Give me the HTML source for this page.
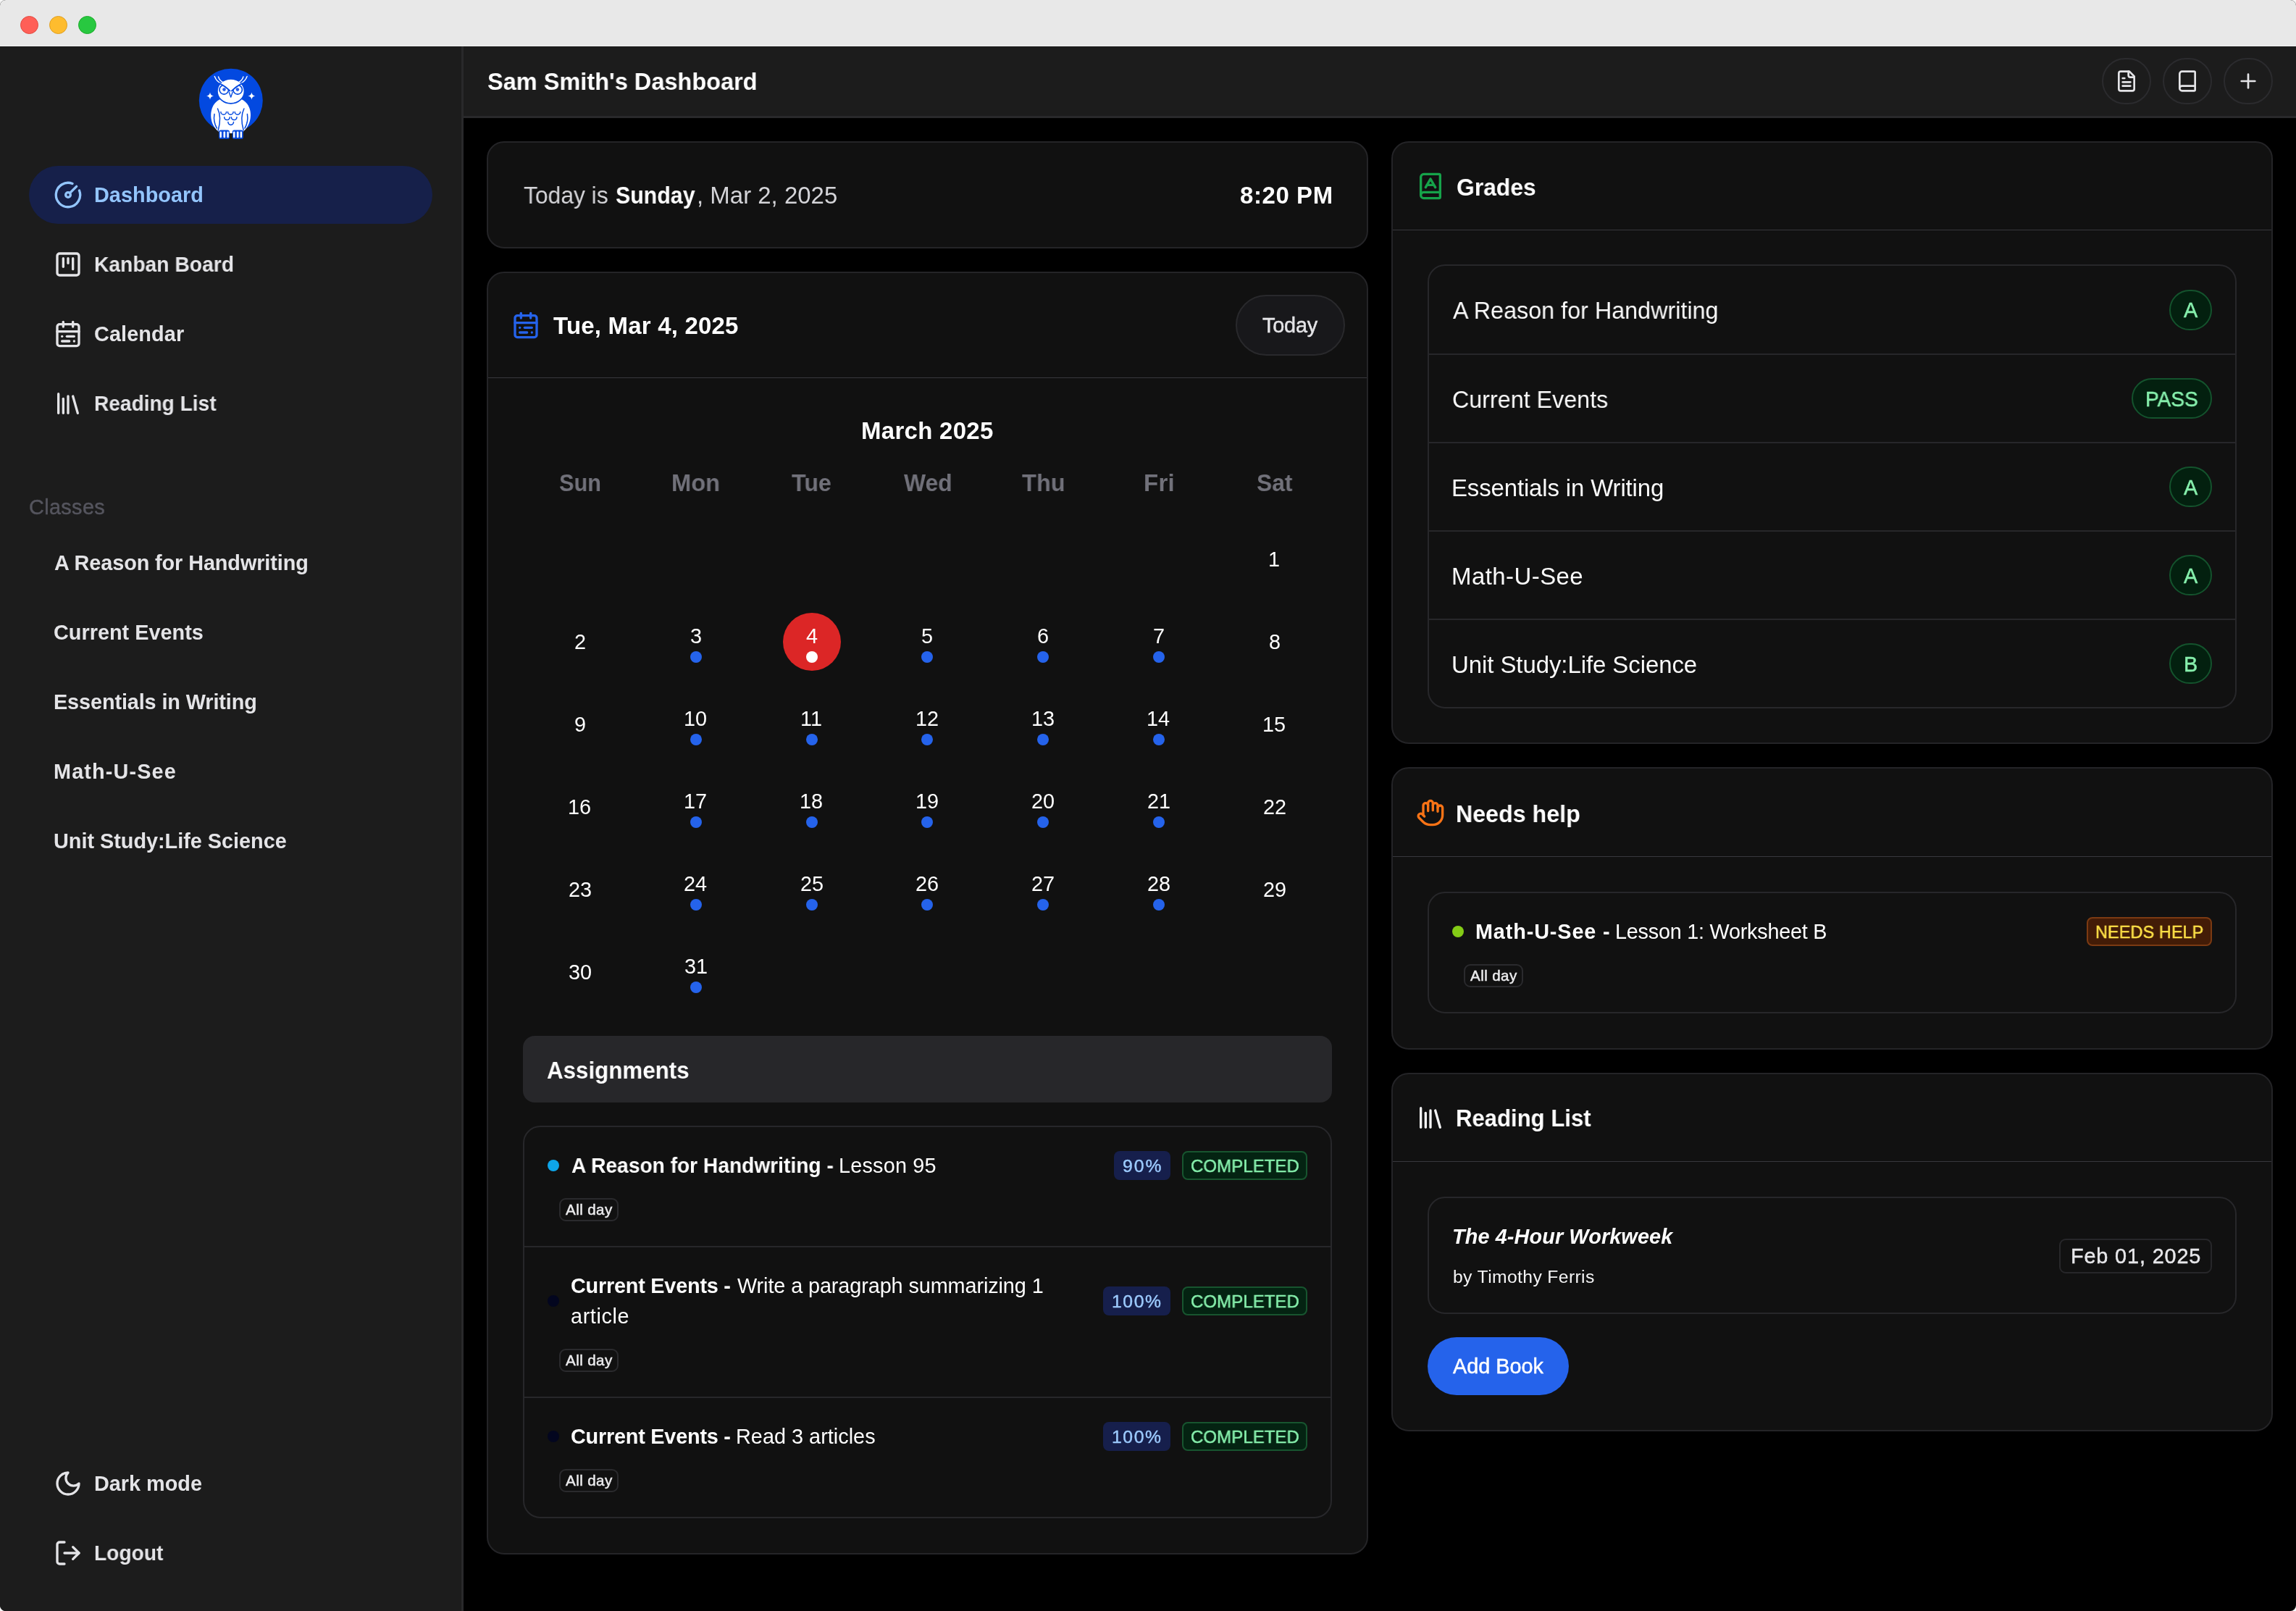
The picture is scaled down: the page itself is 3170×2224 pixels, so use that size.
<!DOCTYPE html>
<html lang="en"><head><meta charset="utf-8"><title>Sam Smith's Dashboard</title>
<style>
html,body{margin:0;padding:0;background:#f7f7f7;}
body{width:3170px;height:2224px;overflow:hidden;font-family:"Liberation Sans", sans-serif;}
#win{position:relative;width:3170px;height:2224px;overflow:hidden;background:#000;border-radius:8px;}
.b{position:absolute;box-sizing:border-box;}
.i{position:absolute;display:block;overflow:visible;}
.t{position:absolute;white-space:nowrap;font-weight:400;transform-origin:0 0;will-change:transform;}
</style></head>
<body><div id="win">
<div class="b" style="left:0px;top:0px;width:3170px;height:63px;background:#e8e8e8;"></div>
<div class="b" style="left:0px;top:63px;width:3170px;height:1px;background:#f4f4f4;"></div>
<div class="b" style="left:27.5px;top:21.5px;width:25px;height:25px;background:#ff5f57;border:1px solid #e24b41;border-radius:13px;"></div>
<div class="b" style="left:67.5px;top:21.5px;width:25px;height:25px;background:#febc2e;border:1px solid #dfa023;border-radius:13px;"></div>
<div class="b" style="left:107.5px;top:21.5px;width:25px;height:25px;background:#28c840;border:1px solid #1dad2b;border-radius:13px;"></div>
<div class="b" style="left:0px;top:64px;width:640px;height:2160px;background:#1c1c1c;border-right:3px solid #29292b;"></div>
<svg class="i" style="left:258px;top:84px" width="120" height="120" viewBox="0 0 120 120" fill="none" stroke-linecap="round" stroke-linejoin="round">
<circle cx="60.8" cy="54.7" r="44" fill="#0349e0"/>
<path d="M60.7 50C80 50 88.5 62 88 76C87.5 86 83 93 78 97.5L43.5 97.5C38 93 33.5 86 33.2 76C33 62 41 50 60.7 50Z" fill="#fff"/>
<rect x="58" y="95" width="5.4" height="5" fill="#fff"/>
<g stroke="#0349e0" stroke-width="1.5">
<path d="M42.5 66C46.5 74 46 86 43.2 96"/><path d="M38 73.4C36.5 82 38.5 88 41.4 93"/>
<path d="M78.9 66C74.9 74 75.4 86 78.2 96"/><path d="M83.4 73.4C84.9 82 82.9 88 80 93"/>
<path d="M46.9 70.4a3.8 3.8 0 0 0 7.6 0"/><path d="M56.5 70.4a3.8 3.8 0 0 0 7.6 0"/><path d="M66.2 70.4a3.8 3.8 0 0 0 7.6 0"/>
<path d="M51.7 77.8a3.8 3.8 0 0 0 7.6 0"/><path d="M61.4 77.8a3.8 3.8 0 0 0 7.6 0"/>
<path d="M56.9 84.6a3.8 3.8 0 0 0 7.6 0"/>
</g>
<ellipse cx="60.7" cy="41.9" rx="18.7" ry="17" fill="#fff" stroke="#0349e0" stroke-width="1.6"/>
<g stroke="#fff" stroke-width="1.4">
<path d="M38.3 21.5Q41 29 48.5 31.8"/><path d="M43.5 22Q45 27 49.8 29.6"/>
<path d="M83.1 21.5Q80.4 29 72.9 31.8"/><path d="M77.9 22Q76.4 27 71.6 29.6"/>
</g>
<g stroke="#0349e0" stroke-width="1.7" fill="#fff">
<circle cx="51.3" cy="39.8" r="6.3"/><circle cx="70.1" cy="39.8" r="6.3"/>
</g>
<clipPath id="owlhead"><ellipse cx="60.7" cy="41.9" rx="17.8" ry="16.1"/></clipPath><g clip-path="url(#owlhead)"><path d="M43 29.5L60 41.4L60 29L46 26Z" fill="#fff"/><path d="M78.4 29.5L61.4 41.4L61.4 29L75.4 26Z" fill="#fff"/></g>
<g stroke="#0349e0" stroke-width="1.9" fill="none">
<path d="M45 31.2Q52 34.5 59.4 41.4"/><path d="M76.4 31.2Q69.4 34.5 62 41.4"/>
<path d="M58.3 43.2L60.7 50.2L63.1 43.2" stroke-width="1.3" fill="#fff"/>
</g>
<circle cx="51.5" cy="39.6" r="2.3" fill="#2a5ee8"/><circle cx="69.9" cy="39.6" r="2.3" fill="#2a5ee8"/>
<path d="M32 43.4Q32.7 47.7 37 48.4Q32.7 49.1 32 53.4Q31.3 49.1 27 48.4Q31.3 47.7 32 43.4Z" fill="#fff"/>
<path d="M89.4 43.4Q90.1 47.7 94.4 48.4Q90.1 49.1 89.4 53.4Q88.7 49.1 84.4 48.4Q88.7 47.7 89.4 43.4Z" fill="#fff"/>
<rect x="44.2" y="95.6" width="14.7" height="12.2" rx="2.6" fill="#0349e0"/>
<rect x="62.8" y="95.6" width="15" height="12.2" rx="2.6" fill="#0349e0"/>
<g fill="#fff">
<rect x="45.5" y="97.4" width="2.4" height="8.8" rx="1.1"/><rect x="50.5" y="97.4" width="2.6" height="8.8" rx="1.1"/><rect x="55.4" y="97.4" width="2.4" height="8.8" rx="1.1"/>
<rect x="64" y="97.4" width="2.4" height="8.8" rx="1.1"/><rect x="68.9" y="97.4" width="2.6" height="8.8" rx="1.1"/><rect x="73.7" y="97.4" width="2.4" height="8.8" rx="1.1"/>
</g>
</svg>

<div class="b" style="left:40px;top:229px;width:557px;height:80px;background:#16204a;border-radius:40px;"></div>
<svg class="i" style="left:74px;top:249px" width="40" height="40" viewBox="0 0 24 24" fill="none" stroke="#93c5fd" stroke-width="2" stroke-linecap="round" stroke-linejoin="round"><path d="M15.6 2.7a10 10 0 1 0 5.7 5.7"/><circle cx="12" cy="12" r="2"/><path d="M13.4 10.6 19 5"/></svg>
<svg class="i" style="left:74px;top:345px" width="40" height="40" viewBox="0 0 24 24" fill="none" stroke="#e4e4e7" stroke-width="2" stroke-linecap="round" stroke-linejoin="round"><rect width="18" height="18" x="3" y="3" rx="2"/><path d="M8 7v7"/><path d="M12 7v4"/><path d="M16 7v9"/></svg>
<svg class="i" style="left:74px;top:441px" width="40" height="40" viewBox="0 0 24 24" fill="none" stroke="#e4e4e7" stroke-width="2" stroke-linecap="round" stroke-linejoin="round"><rect width="18" height="18" x="3" y="4" rx="2"/><path d="M16 2v4"/><path d="M3 10h18"/><path d="M8 2v4"/><path d="M17 14h-6"/><path d="M13 18H7"/><path d="M7 14h.01"/><path d="M17 18h.01"/></svg>
<svg class="i" style="left:74px;top:537px" width="40" height="40" viewBox="0 0 24 24" fill="none" stroke="#e4e4e7" stroke-width="2" stroke-linecap="round" stroke-linejoin="round"><path d="m16 6 4 14"/><path d="M12 6v14"/><path d="M8 8v12"/><path d="M4 4v16"/></svg>
<svg class="i" style="left:74px;top:2028px" width="40" height="40" viewBox="0 0 24 24" fill="none" stroke="#e4e4e7" stroke-width="2" stroke-linecap="round" stroke-linejoin="round"><path d="M12 3a6 6 0 0 0 9 9 9 9 0 1 1-9-9Z"/></svg>
<svg class="i" style="left:74px;top:2124px" width="40" height="40" viewBox="0 0 24 24" fill="none" stroke="#e4e4e7" stroke-width="2" stroke-linecap="round" stroke-linejoin="round"><path d="M9 21H5a2 2 0 0 1-2-2V5a2 2 0 0 1 2-2h4"/><polyline points="16 17 21 12 16 7"/><line x1="21" x2="9" y1="12" y2="12"/></svg>
<div class="b" style="left:640px;top:64px;width:2530px;height:99px;background:#1c1c1c;border-bottom:3px solid #29292b;"></div>
<div class="b" style="left:2902px;top:80px;width:68px;height:64px;border:2px solid #2b2b2e;border-radius:32px;"></div>
<svg class="i" style="left:2920px;top:96px" width="32" height="32" viewBox="0 0 24 24" fill="none" stroke="#e4e4e7" stroke-width="2" stroke-linecap="round" stroke-linejoin="round"><path d="M15 2H6a2 2 0 0 0-2 2v16a2 2 0 0 0 2 2h12a2 2 0 0 0 2-2V7Z"/><path d="M14 2v4a2 2 0 0 0 2 2h4"/><path d="M10 9H8"/><path d="M16 13H8"/><path d="M16 17H8"/></svg>
<div class="b" style="left:2986px;top:80px;width:68px;height:64px;border:2px solid #2b2b2e;border-radius:32px;"></div>
<svg class="i" style="left:3004px;top:96px" width="32" height="32" viewBox="0 0 24 24" fill="none" stroke="#e4e4e7" stroke-width="2" stroke-linecap="round" stroke-linejoin="round"><path d="M4 19.5v-15A2.5 2.5 0 0 1 6.5 2H19a1 1 0 0 1 1 1v18a1 1 0 0 1-1 1H6.5a1 1 0 0 1 0-5H20"/></svg>
<div class="b" style="left:3070px;top:80px;width:68px;height:64px;border:2px solid #2b2b2e;border-radius:32px;"></div>
<svg class="i" style="left:3088px;top:96px" width="32" height="32" viewBox="0 0 24 24" fill="none" stroke="#e4e4e7" stroke-width="2" stroke-linecap="round" stroke-linejoin="round"><path d="M5 12h14"/><path d="M12 5v14"/></svg>
<div class="b" style="left:672px;top:195px;width:1217px;height:148px;background:#111111;border:2px solid #242427;border-radius:24px;"></div>
<div class="b" style="left:672px;top:375px;width:1217px;height:1771px;background:#111111;border:2px solid #242427;border-radius:24px;"></div>
<svg class="i" style="left:706px;top:429px" width="40" height="40" viewBox="0 0 24 24" fill="none" stroke="#2563eb" stroke-width="2" stroke-linecap="round" stroke-linejoin="round"><rect width="18" height="18" x="3" y="4" rx="2"/><path d="M16 2v4"/><path d="M3 10h18"/><path d="M8 2v4"/><path d="M17 14h-6"/><path d="M13 18H7"/><path d="M7 14h.01"/><path d="M17 18h.01"/></svg>
<div class="b" style="left:1706px;top:407px;width:151px;height:84px;background:#18181b;border:2px solid #29292c;border-radius:42px;"></div>
<div class="b" style="left:674px;top:521px;width:1213px;height:1px;background:#38383d;"></div>
<div class="b" style="left:1080.8px;top:846px;width:80px;height:80px;background:#dc2626;border-radius:40px;"></div>
<div class="b" style="left:952.6px;top:899px;width:16px;height:16px;background:#2563eb;border-radius:8px;"></div>
<div class="b" style="left:1112.5px;top:899px;width:16px;height:16px;background:#ffffff;border-radius:8px;"></div>
<div class="b" style="left:1272.3px;top:899px;width:16px;height:16px;background:#2563eb;border-radius:8px;"></div>
<div class="b" style="left:1432.1px;top:899px;width:16px;height:16px;background:#2563eb;border-radius:8px;"></div>
<div class="b" style="left:1592.0px;top:899px;width:16px;height:16px;background:#2563eb;border-radius:8px;"></div>
<div class="b" style="left:952.6px;top:1013px;width:16px;height:16px;background:#2563eb;border-radius:8px;"></div>
<div class="b" style="left:1112.5px;top:1013px;width:16px;height:16px;background:#2563eb;border-radius:8px;"></div>
<div class="b" style="left:1272.3px;top:1013px;width:16px;height:16px;background:#2563eb;border-radius:8px;"></div>
<div class="b" style="left:1432.1px;top:1013px;width:16px;height:16px;background:#2563eb;border-radius:8px;"></div>
<div class="b" style="left:1592.0px;top:1013px;width:16px;height:16px;background:#2563eb;border-radius:8px;"></div>
<div class="b" style="left:952.6px;top:1127px;width:16px;height:16px;background:#2563eb;border-radius:8px;"></div>
<div class="b" style="left:1112.5px;top:1127px;width:16px;height:16px;background:#2563eb;border-radius:8px;"></div>
<div class="b" style="left:1272.3px;top:1127px;width:16px;height:16px;background:#2563eb;border-radius:8px;"></div>
<div class="b" style="left:1432.1px;top:1127px;width:16px;height:16px;background:#2563eb;border-radius:8px;"></div>
<div class="b" style="left:1592.0px;top:1127px;width:16px;height:16px;background:#2563eb;border-radius:8px;"></div>
<div class="b" style="left:952.6px;top:1241px;width:16px;height:16px;background:#2563eb;border-radius:8px;"></div>
<div class="b" style="left:1112.5px;top:1241px;width:16px;height:16px;background:#2563eb;border-radius:8px;"></div>
<div class="b" style="left:1272.3px;top:1241px;width:16px;height:16px;background:#2563eb;border-radius:8px;"></div>
<div class="b" style="left:1432.1px;top:1241px;width:16px;height:16px;background:#2563eb;border-radius:8px;"></div>
<div class="b" style="left:1592.0px;top:1241px;width:16px;height:16px;background:#2563eb;border-radius:8px;"></div>
<div class="b" style="left:952.6px;top:1355px;width:16px;height:16px;background:#2563eb;border-radius:8px;"></div>
<div class="b" style="left:722px;top:1430px;width:1117px;height:92px;background:#27272a;border-radius:16px;"></div>
<div class="b" style="left:722px;top:1554px;width:1117px;height:542px;border:2px solid #27272a;border-radius:24px;"></div>
<div class="b" style="left:724px;top:1720px;width:1113px;height:2px;background:#27272a;"></div>
<div class="b" style="left:724px;top:1928px;width:1113px;height:2px;background:#27272a;"></div>
<div class="b" style="left:756px;top:1601px;width:16px;height:16px;background:#0ea5e9;border-radius:8px;"></div>
<div class="b" style="left:772px;top:1654px;width:82px;height:32px;border:2px solid #2a2a2d;border-radius:9px;"></div>
<div class="b" style="left:1538px;top:1589px;width:78px;height:40px;background:#161f4c;border-radius:8px;"></div>
<div class="b" style="left:1632px;top:1589px;width:173px;height:40px;background:#042312;border:2px solid #17552f;border-radius:8px;"></div>
<div class="b" style="left:756px;top:1788px;width:16px;height:16px;background:#03061f;border-radius:8px;"></div>
<div class="b" style="left:772px;top:1862px;width:82px;height:32px;border:2px solid #2a2a2d;border-radius:9px;"></div>
<div class="b" style="left:1523px;top:1776px;width:93px;height:40px;background:#161f4c;border-radius:8px;"></div>
<div class="b" style="left:1632px;top:1776px;width:173px;height:40px;background:#042312;border:2px solid #17552f;border-radius:8px;"></div>
<div class="b" style="left:756px;top:1975px;width:16px;height:16px;background:#03061f;border-radius:8px;"></div>
<div class="b" style="left:772px;top:2028px;width:82px;height:32px;border:2px solid #2a2a2d;border-radius:9px;"></div>
<div class="b" style="left:1523px;top:1963px;width:93px;height:40px;background:#161f4c;border-radius:8px;"></div>
<div class="b" style="left:1632px;top:1963px;width:173px;height:40px;background:#042312;border:2px solid #17552f;border-radius:8px;"></div>
<div class="b" style="left:1921px;top:195px;width:1217px;height:832px;background:#111111;border:2px solid #242427;border-radius:24px;"></div>
<svg class="i" style="left:1955px;top:237px" width="40" height="40" viewBox="0 0 24 24" fill="none" stroke="#16a34a" stroke-width="2" stroke-linecap="round" stroke-linejoin="round"><path d="M4 19.5v-15A2.5 2.5 0 0 1 6.5 2H19a1 1 0 0 1 1 1v18a1 1 0 0 1-1 1H6.5a1 1 0 0 1 0-5H20"/><path d="m8 13 4-7 4 7"/><path d="M9.1 11h5.7"/></svg>
<div class="b" style="left:1923px;top:317px;width:1213px;height:1px;background:#38383d;"></div>
<div class="b" style="left:1971px;top:365px;width:1117px;height:613px;border:2px solid #27272a;border-radius:24px;"></div>
<div class="b" style="left:2995px;top:399.5px;width:59px;height:56px;background:#03200f;border:2px solid #14532d;border-radius:28px;"></div>
<div class="b" style="left:1973px;top:488px;width:1113px;height:2px;background:#27272a;"></div>
<div class="b" style="left:2943px;top:522px;width:111px;height:56px;background:#03200f;border:2px solid #14532d;border-radius:28px;"></div>
<div class="b" style="left:1973px;top:610px;width:1113px;height:2px;background:#27272a;"></div>
<div class="b" style="left:2995px;top:644px;width:59px;height:56px;background:#03200f;border:2px solid #14532d;border-radius:28px;"></div>
<div class="b" style="left:1973px;top:732px;width:1113px;height:2px;background:#27272a;"></div>
<div class="b" style="left:2995px;top:766px;width:59px;height:56px;background:#03200f;border:2px solid #14532d;border-radius:28px;"></div>
<div class="b" style="left:1973px;top:854px;width:1113px;height:2px;background:#27272a;"></div>
<div class="b" style="left:2995px;top:888px;width:59px;height:56px;background:#03200f;border:2px solid #14532d;border-radius:28px;"></div>
<div class="b" style="left:1921px;top:1059px;width:1217px;height:390px;background:#111111;border:2px solid #242427;border-radius:24px;"></div>
<svg class="i" style="left:1955px;top:1102px" width="40" height="40" viewBox="0 0 24 24" fill="none" stroke="#f97316" stroke-width="2" stroke-linecap="round" stroke-linejoin="round"><path d="M18 11V6a2 2 0 0 0-2-2a2 2 0 0 0-2 2"/><path d="M14 10V4a2 2 0 0 0-2-2a2 2 0 0 0-2 2v2"/><path d="M10 10.5V6a2 2 0 0 0-2-2a2 2 0 0 0-2 2v8"/><path d="M18 8a2 2 0 1 1 4 0v6a8 8 0 0 1-8 8h-2c-2.8 0-4.5-.86-5.99-2.34l-3.6-3.6a2 2 0 0 1 2.83-2.82L7 15"/></svg>
<div class="b" style="left:1923px;top:1182px;width:1213px;height:1px;background:#38383d;"></div>
<div class="b" style="left:1971px;top:1231px;width:1117px;height:168px;border:2px solid #27272a;border-radius:24px;"></div>
<div class="b" style="left:2005px;top:1278px;width:16px;height:16px;background:#84cc16;border-radius:8px;"></div>
<div class="b" style="left:2021px;top:1331px;width:82px;height:32px;border:2px solid #2a2a2d;border-radius:9px;"></div>
<div class="b" style="left:2881px;top:1266px;width:173px;height:40px;background:#431c07;border:2px solid #7c3a12;border-radius:8px;"></div>
<div class="b" style="left:1921px;top:1481px;width:1217px;height:495px;background:#111111;border:2px solid #242427;border-radius:24px;"></div>
<svg class="i" style="left:1955px;top:1523px" width="40" height="40" viewBox="0 0 24 24" fill="none" stroke="#f4f4f5" stroke-width="2" stroke-linecap="round" stroke-linejoin="round"><path d="m16 6 4 14"/><path d="M12 6v14"/><path d="M8 8v12"/><path d="M4 4v16"/></svg>
<div class="b" style="left:1923px;top:1603px;width:1213px;height:1px;background:#38383d;"></div>
<div class="b" style="left:1971px;top:1652px;width:1117px;height:162px;border:2px solid #27272a;border-radius:24px;"></div>
<div class="b" style="left:2843px;top:1710px;width:211px;height:48px;border:2px solid #27272a;border-radius:9px;"></div>
<div class="b" style="left:1971px;top:1846px;width:195px;height:80px;background:#2563eb;border-radius:40px;"></div>
<div class="t" style="left:130.0px;top:248.0px;font-size:28.84px;line-height:43px;color:#93c5fd;letter-spacing:0.04px;"><span style="font-weight:700;">Dashboard</span></div>
<div class="t" style="left:130.0px;top:344.0px;font-size:28.84px;line-height:43px;color:#e4e4e7;transform:scaleX(0.9794);"><span style="font-weight:700;">Kanban Board</span></div>
<div class="t" style="left:130.0px;top:440.0px;font-size:28.84px;line-height:43px;color:#e4e4e7;letter-spacing:0.11px;"><span style="font-weight:700;">Calendar</span></div>
<div class="t" style="left:130.0px;top:536.0px;font-size:28.84px;line-height:43px;color:#e4e4e7;transform:scaleX(0.9746);"><span style="font-weight:700;">Reading List</span></div>
<div class="t" style="left:40.0px;top:679.0px;font-size:28.84px;line-height:43px;color:#55555e;letter-spacing:0.36px;"><span style="-webkit-text-stroke:0.45px currentColor;">Classes</span></div>
<div class="t" style="left:74.8px;top:755.5px;font-size:28.84px;line-height:43px;color:#e4e4e7;letter-spacing:-0.09px;"><span style="font-weight:700;">A Reason for Handwriting</span></div>
<div class="t" style="left:73.8px;top:851.5px;font-size:28.84px;line-height:43px;color:#e4e4e7;letter-spacing:0.01px;"><span style="font-weight:700;">Current Events</span></div>
<div class="t" style="left:73.8px;top:947.5px;font-size:28.84px;line-height:43px;color:#e4e4e7;letter-spacing:-0.11px;"><span style="font-weight:700;">Essentials in Writing</span></div>
<div class="t" style="left:73.8px;top:1043.5px;font-size:28.84px;line-height:43px;color:#e4e4e7;letter-spacing:1.14px;"><span style="font-weight:700;">Math-U-See</span></div>
<div class="t" style="left:73.8px;top:1139.5px;font-size:28.84px;line-height:43px;color:#e4e4e7;letter-spacing:-0.01px;"><span style="font-weight:700;">Unit Study:Life Science</span></div>
<div class="t" style="left:129.7px;top:2026.5px;font-size:28.84px;line-height:43px;color:#e4e4e7;"><span style="font-weight:700;">Dark mode</span></div>
<div class="t" style="left:129.7px;top:2122.5px;font-size:28.84px;line-height:43px;color:#e4e4e7;transform:scaleX(0.9768);"><span style="font-weight:700;">Logout</span></div>
<div class="t" style="left:672.5px;top:88.2px;font-size:32.96px;line-height:49px;color:#ffffff;transform:scaleX(0.9864);"><span style="font-weight:700;">Sam Smith's Dashboard</span></div>
<div class="t" style="left:723.0px;top:245.2px;font-size:32.96px;line-height:49px;color:#d4d4d8;transform:scaleX(0.9650);">Today is </div>
<div class="t" style="left:850.3px;top:245.2px;font-size:32.96px;line-height:49px;color:#ffffff;transform:scaleX(0.9207);"><span style="font-weight:700;">Sunday</span></div>
<div class="t" style="left:961.5px;top:245.2px;font-size:32.96px;line-height:49px;color:#d4d4d8;letter-spacing:0.01px;">, Mar 2, 2025</div>
<div class="t" style="left:1711.5px;top:245.4px;font-size:32.96px;line-height:49px;color:#ffffff;letter-spacing:0.60px;"><span style="font-weight:700;">8:20 PM</span></div>
<div class="t" style="left:763.5px;top:425.1px;font-size:32.96px;line-height:49px;color:#ffffff;letter-spacing:0.22px;"><span style="font-weight:700;">Tue, Mar 4, 2025</span></div>
<div class="t" style="left:1743.2px;top:427.5px;font-size:28.84px;line-height:43px;color:#e4e4e7;letter-spacing:-0.20px;"><span style="-webkit-text-stroke:0.45px currentColor;">Today</span></div>
<div class="t" style="left:1188.5px;top:570.2px;font-size:32.96px;line-height:49px;color:#ffffff;letter-spacing:0.31px;"><span style="font-weight:700;">March 2025</span></div>
<div class="t" style="left:772.3px;top:642.1px;font-size:32.96px;line-height:49px;color:#71717a;transform:scaleX(0.9328);"><span style="font-weight:700;">Sun</span></div>
<div class="t" style="left:926.6px;top:642.1px;font-size:32.96px;line-height:49px;color:#71717a;transform:scaleX(0.9910);"><span style="font-weight:700;">Mon</span></div>
<div class="t" style="left:1093.2px;top:642.1px;font-size:32.96px;line-height:49px;color:#71717a;transform:scaleX(0.9765);"><span style="font-weight:700;">Tue</span></div>
<div class="t" style="left:1248.0px;top:642.1px;font-size:32.96px;line-height:49px;color:#71717a;transform:scaleX(0.9666);"><span style="font-weight:700;">Wed</span></div>
<div class="t" style="left:1411.3px;top:642.1px;font-size:32.96px;line-height:49px;color:#71717a;transform:scaleX(0.9870);"><span style="font-weight:700;">Thu</span></div>
<div class="t" style="left:1578.8px;top:642.1px;font-size:32.96px;line-height:49px;color:#71717a;letter-spacing:0.27px;"><span style="font-weight:700;">Fri</span></div>
<div class="t" style="left:1735.0px;top:642.1px;font-size:32.96px;line-height:49px;color:#71717a;transform:scaleX(0.9648);"><span style="font-weight:700;">Sat</span></div>
<div class="t" style="left:1751.3px;top:750.5px;font-size:28.84px;line-height:43px;color:#ffffff;">1</div>
<div class="t" style="left:792.8px;top:864.5px;font-size:28.84px;line-height:43px;color:#ffffff;">2</div>
<div class="t" style="left:952.6px;top:856.8px;font-size:28.84px;line-height:43px;color:#ffffff;">3</div>
<div class="t" style="left:1112.5px;top:856.8px;font-size:28.84px;line-height:43px;color:#ffffff;">4</div>
<div class="t" style="left:1272.3px;top:856.8px;font-size:28.84px;line-height:43px;color:#ffffff;">5</div>
<div class="t" style="left:1432.1px;top:856.8px;font-size:28.84px;line-height:43px;color:#ffffff;">6</div>
<div class="t" style="left:1592.0px;top:856.8px;font-size:28.84px;line-height:43px;color:#ffffff;">7</div>
<div class="t" style="left:1751.8px;top:864.5px;font-size:28.84px;line-height:43px;color:#ffffff;">8</div>
<div class="t" style="left:792.8px;top:978.5px;font-size:28.84px;line-height:43px;color:#ffffff;">9</div>
<div class="t" style="left:944.1px;top:970.8px;font-size:28.84px;line-height:43px;color:#ffffff;">10</div>
<div class="t" style="left:1105.1px;top:970.8px;font-size:28.84px;line-height:43px;color:#ffffff;">11</div>
<div class="t" style="left:1263.8px;top:970.8px;font-size:28.84px;line-height:43px;color:#ffffff;">12</div>
<div class="t" style="left:1423.6px;top:970.8px;font-size:28.84px;line-height:43px;color:#ffffff;">13</div>
<div class="t" style="left:1583.0px;top:970.8px;font-size:28.84px;line-height:43px;color:#ffffff;">14</div>
<div class="t" style="left:1743.3px;top:978.5px;font-size:28.84px;line-height:43px;color:#ffffff;">15</div>
<div class="t" style="left:784.3px;top:1092.5px;font-size:28.84px;line-height:43px;color:#ffffff;">16</div>
<div class="t" style="left:944.1px;top:1084.8px;font-size:28.84px;line-height:43px;color:#ffffff;">17</div>
<div class="t" style="left:1104.0px;top:1084.8px;font-size:28.84px;line-height:43px;color:#ffffff;">18</div>
<div class="t" style="left:1263.8px;top:1084.8px;font-size:28.84px;line-height:43px;color:#ffffff;">19</div>
<div class="t" style="left:1424.1px;top:1084.8px;font-size:28.84px;line-height:43px;color:#ffffff;">20</div>
<div class="t" style="left:1584.0px;top:1084.8px;font-size:28.84px;line-height:43px;color:#ffffff;">21</div>
<div class="t" style="left:1743.8px;top:1092.5px;font-size:28.84px;line-height:43px;color:#ffffff;">22</div>
<div class="t" style="left:784.8px;top:1206.5px;font-size:28.84px;line-height:43px;color:#ffffff;">23</div>
<div class="t" style="left:944.1px;top:1198.8px;font-size:28.84px;line-height:43px;color:#ffffff;">24</div>
<div class="t" style="left:1104.5px;top:1198.8px;font-size:28.84px;line-height:43px;color:#ffffff;">25</div>
<div class="t" style="left:1264.3px;top:1198.8px;font-size:28.84px;line-height:43px;color:#ffffff;">26</div>
<div class="t" style="left:1424.1px;top:1198.8px;font-size:28.84px;line-height:43px;color:#ffffff;">27</div>
<div class="t" style="left:1584.0px;top:1198.8px;font-size:28.84px;line-height:43px;color:#ffffff;">28</div>
<div class="t" style="left:1743.8px;top:1206.5px;font-size:28.84px;line-height:43px;color:#ffffff;">29</div>
<div class="t" style="left:784.8px;top:1320.5px;font-size:28.84px;line-height:43px;color:#ffffff;">30</div>
<div class="t" style="left:944.6px;top:1312.8px;font-size:28.84px;line-height:43px;color:#ffffff;">31</div>
<div class="t" style="left:755.0px;top:1452.5px;font-size:32.96px;line-height:49px;color:#ffffff;transform:scaleX(0.9504);"><span style="font-weight:700;">Assignments</span></div>
<div class="t" style="left:788.8px;top:1588.2px;font-size:28.84px;line-height:43px;color:#ffffff;transform:scaleX(0.9764);"><span style="font-weight:700;">A Reason for Handwriting -</span> </div>
<div class="t" style="left:1158.2px;top:1588.2px;font-size:28.84px;line-height:43px;color:#ffffff;letter-spacing:0.20px;">Lesson 95</div>
<div class="t" style="left:780.5px;top:1654.3px;font-size:20.6px;line-height:31px;color:#ececee;letter-spacing:0.41px;"><span style="-webkit-text-stroke:0.45px currentColor;">All day</span></div>
<div class="t" style="left:1549.8px;top:1591.0px;font-size:24.72px;line-height:37px;color:#9ccafd;letter-spacing:1.95px;"><span style="-webkit-text-stroke:0.45px currentColor;">90%</span></div>
<div class="t" style="left:1643.5px;top:1591.0px;font-size:24.72px;line-height:37px;color:#86efac;transform:scaleX(0.9738);"><span style="-webkit-text-stroke:0.45px currentColor;">COMPLETED</span></div>
<div class="t" style="left:787.8px;top:1753.5px;font-size:28.84px;line-height:43px;color:#ffffff;letter-spacing:-0.22px;"><span style="font-weight:700;">Current Events -</span> </div>
<div class="t" style="left:1018.0px;top:1753.5px;font-size:28.84px;line-height:43px;color:#ffffff;letter-spacing:-0.10px;">Write a paragraph summarizing 1 </div>
<div class="t" style="left:787.8px;top:1795.5px;font-size:28.84px;line-height:43px;color:#ffffff;letter-spacing:0.61px;">article</div>
<div class="t" style="left:780.5px;top:1862.3px;font-size:20.6px;line-height:31px;color:#ececee;letter-spacing:0.41px;"><span style="-webkit-text-stroke:0.45px currentColor;">All day</span></div>
<div class="t" style="left:1535.0px;top:1778.0px;font-size:24.72px;line-height:37px;color:#9ccafd;letter-spacing:1.59px;"><span style="-webkit-text-stroke:0.45px currentColor;">100%</span></div>
<div class="t" style="left:1643.5px;top:1778.0px;font-size:24.72px;line-height:37px;color:#86efac;transform:scaleX(0.9738);"><span style="-webkit-text-stroke:0.45px currentColor;">COMPLETED</span></div>
<div class="t" style="left:787.8px;top:1961.7px;font-size:28.84px;line-height:43px;color:#ffffff;letter-spacing:-0.22px;"><span style="font-weight:700;">Current Events -</span> </div>
<div class="t" style="left:1015.7px;top:1961.7px;font-size:28.84px;line-height:43px;color:#ffffff;letter-spacing:0.02px;">Read 3 articles</div>
<div class="t" style="left:780.5px;top:2028.3px;font-size:20.6px;line-height:31px;color:#ececee;letter-spacing:0.41px;"><span style="-webkit-text-stroke:0.45px currentColor;">All day</span></div>
<div class="t" style="left:1535.0px;top:1965.0px;font-size:24.72px;line-height:37px;color:#9ccafd;letter-spacing:1.59px;"><span style="-webkit-text-stroke:0.45px currentColor;">100%</span></div>
<div class="t" style="left:1643.5px;top:1965.0px;font-size:24.72px;line-height:37px;color:#86efac;transform:scaleX(0.9738);"><span style="-webkit-text-stroke:0.45px currentColor;">COMPLETED</span></div>
<div class="t" style="left:2011.0px;top:233.5px;font-size:32.96px;line-height:49px;color:#ffffff;transform:scaleX(0.9655);"><span style="font-weight:700;">Grades</span></div>
<div class="t" style="left:2006.0px;top:404.0px;font-size:32.96px;line-height:49px;color:#fafafa;transform:scaleX(0.9809);">A Reason for Handwriting</div>
<div class="t" style="left:3014.5px;top:407.0px;font-size:28.84px;line-height:43px;color:#86efac;"><span style="-webkit-text-stroke:0.45px currentColor;">A</span></div>
<div class="t" style="left:2005.0px;top:526.5px;font-size:32.96px;line-height:49px;color:#fafafa;transform:scaleX(0.9794);">Current Events</div>
<div class="t" style="left:2961.7px;top:529.5px;font-size:28.84px;line-height:43px;color:#86efac;transform:scaleX(0.9742);"><span style="-webkit-text-stroke:0.45px currentColor;">PASS</span></div>
<div class="t" style="left:2004.0px;top:648.5px;font-size:32.96px;line-height:49px;color:#fafafa;letter-spacing:-0.14px;">Essentials in Writing</div>
<div class="t" style="left:3014.5px;top:651.5px;font-size:28.84px;line-height:43px;color:#86efac;"><span style="-webkit-text-stroke:0.45px currentColor;">A</span></div>
<div class="t" style="left:2004.0px;top:770.5px;font-size:32.96px;line-height:49px;color:#fafafa;letter-spacing:0.45px;">Math-U-See</div>
<div class="t" style="left:3014.5px;top:773.5px;font-size:28.84px;line-height:43px;color:#86efac;"><span style="-webkit-text-stroke:0.45px currentColor;">A</span></div>
<div class="t" style="left:2004.0px;top:892.5px;font-size:32.96px;line-height:49px;color:#fafafa;letter-spacing:-0.07px;">Unit Study:Life Science</div>
<div class="t" style="left:3014.5px;top:895.5px;font-size:28.84px;line-height:43px;color:#86efac;"><span style="-webkit-text-stroke:0.45px currentColor;">B</span></div>
<div class="t" style="left:2010.0px;top:1098.8px;font-size:32.96px;line-height:49px;color:#ffffff;transform:scaleX(0.9770);"><span style="font-weight:700;">Needs help</span></div>
<div class="t" style="left:2037.0px;top:1264.5px;font-size:28.84px;line-height:43px;color:#ffffff;letter-spacing:0.86px;"><span style="font-weight:700;">Math-U-See -</span> </div>
<div class="t" style="left:2229.7px;top:1264.5px;font-size:28.84px;line-height:43px;color:#ffffff;letter-spacing:-0.25px;">Lesson 1: Worksheet B</div>
<div class="t" style="left:2029.5px;top:1331.3px;font-size:20.6px;line-height:31px;color:#ececee;letter-spacing:0.41px;"><span style="-webkit-text-stroke:0.45px currentColor;">All day</span></div>
<div class="t" style="left:2892.6px;top:1267.8px;font-size:24.72px;line-height:37px;color:#fde047;transform:scaleX(0.9538);"><span style="-webkit-text-stroke:0.45px currentColor;">NEEDS HELP</span></div>
<div class="t" style="left:2010.4px;top:1519.1px;font-size:32.96px;line-height:49px;color:#ffffff;transform:scaleX(0.9435);"><span style="font-weight:700;">Reading List</span></div>
<div class="t" style="left:2005.2px;top:1686.1px;font-size:28.84px;line-height:43px;color:#ffffff;letter-spacing:0.11px;"><span style="font-weight:700;font-style:italic;">The 4-Hour Workweek</span></div>
<div class="t" style="left:2005.5px;top:1743.8px;font-size:24.72px;line-height:37px;color:#f4f4f5;letter-spacing:0.36px;">by Timothy Ferris</div>
<div class="t" style="left:2858.5px;top:1712.5px;font-size:28.84px;line-height:43px;color:#e7e7ea;letter-spacing:0.86px;"><span style="-webkit-text-stroke:0.45px currentColor;">Feb 01, 2025</span></div>
<div class="t" style="left:2005.9px;top:1864.5px;font-size:28.84px;line-height:43px;color:#ffffff;letter-spacing:-0.01px;"><span style="-webkit-text-stroke:0.45px currentColor;">Add Book</span></div>
</div>
<script>(function(){var w=window.innerWidth;if(w&&Math.abs(w-3170)>2){document.documentElement.style.zoom=w/3170;}})();</script>
</body></html>
